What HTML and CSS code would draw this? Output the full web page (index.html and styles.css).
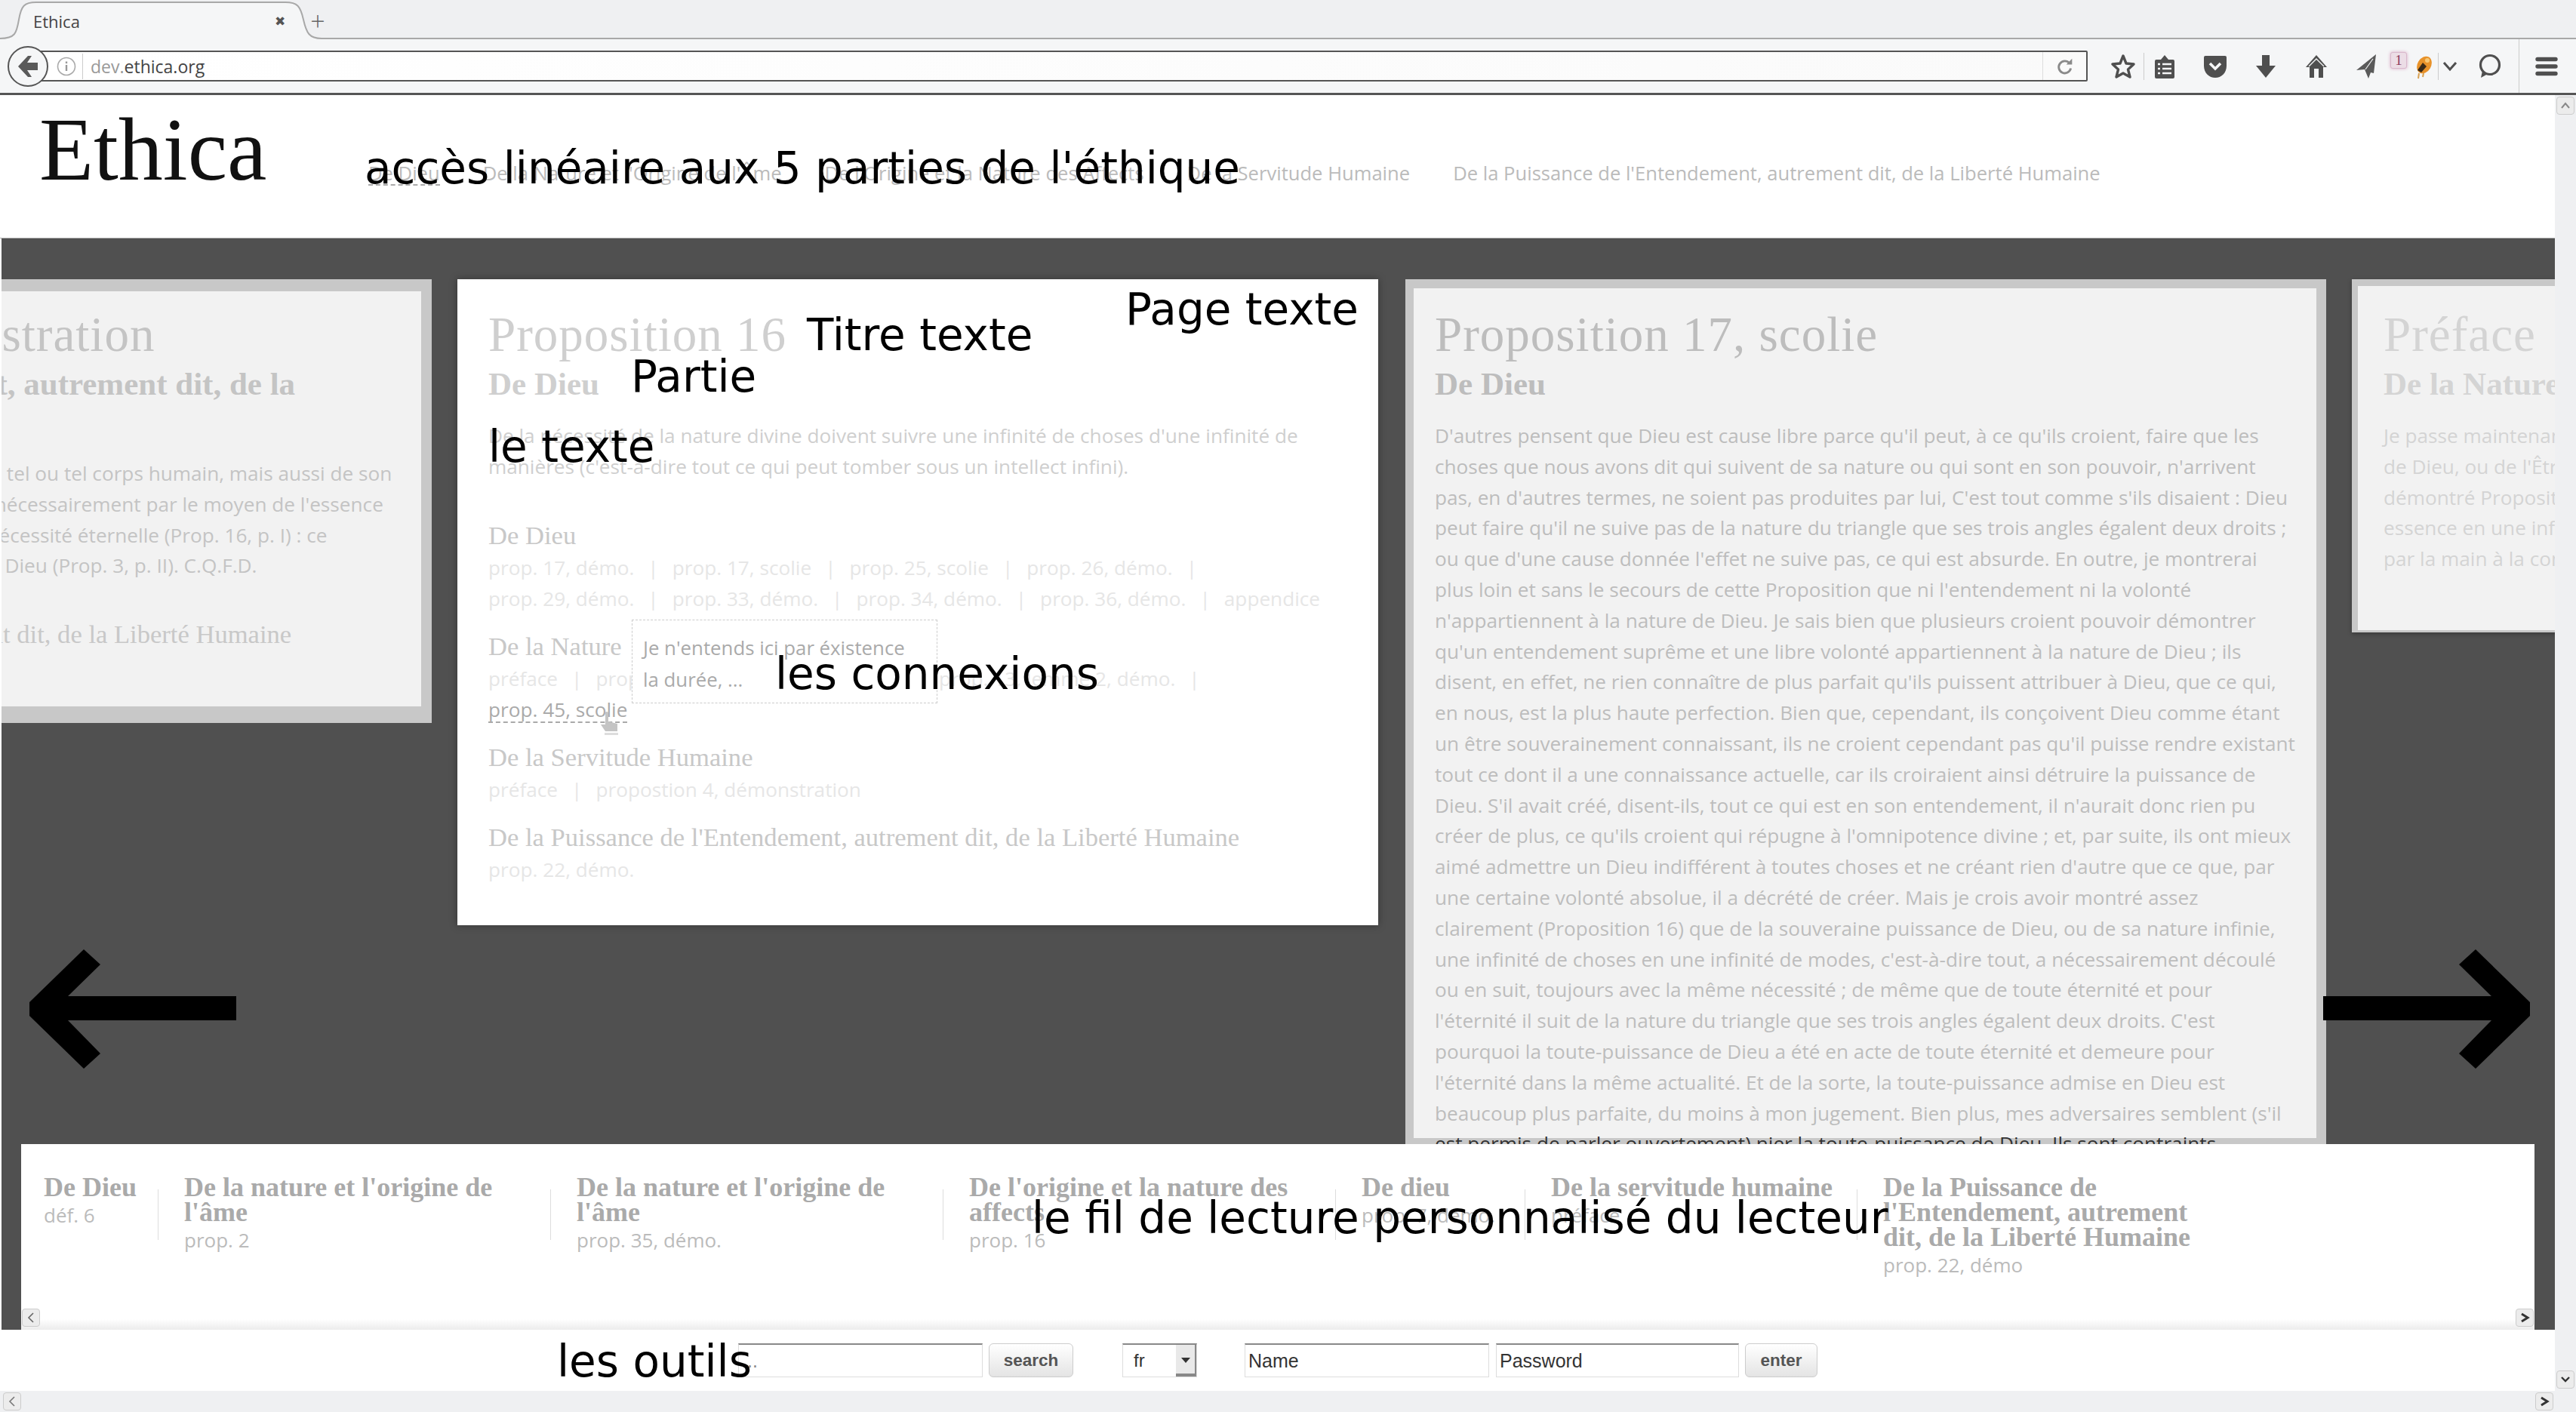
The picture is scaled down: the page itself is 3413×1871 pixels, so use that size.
FILE: index.html
```html
<!DOCTYPE html>
<html lang="fr">
    <head>
        <meta charset="utf-8">
        <title>Ethica</title>
        <link rel="stylesheet" href="styles.css">
    </head>
    <body>

        <!-- browser chrome -->
        <div class="tabbar">
            <svg class="tabshape" width="440" height="54" viewBox="0 0 440 54">
                <path d="M0 51 C20 51 22 44 25 26 C28 8 32 3 48 3 L378 3 C394 3 398 8 402 26 C406 44 410 51 426 51 L440 51 L440 54 L0 54 Z" fill="#f5f6f7"/>
                <path d="M0 51 C20 51 22 44 25 26 C28 8 32 3 48 3 L378 3 C394 3 398 8 402 26 C406 44 410 51 426 51 L440 51" fill="none" stroke="#a8a8a8" stroke-width="2"/>
            </svg>
            <span class="tabtitle">Ethica</span>
            <span class="tabclose">&#10006;</span>
            <span class="tabplus">+</span>
        </div>

        <div class="navbar">
            <div class="backbtn">
                <svg width="30" height="34" viewBox="0 0 30 34"><path d="M2 17 L15 3 L20 3 L14 12 L28 12 L28 22 L14 22 L20 31 L15 31 Z" fill="#5a5a5a"/></svg>
            </div>
            <div class="urlbar">
                <svg class="urlinfo" width="26" height="26" viewBox="0 0 26 26"><circle cx="13" cy="13" r="11.5" fill="none" stroke="#aaa" stroke-width="1.6"/><rect x="11.8" y="11" width="2.4" height="8" fill="#999"/><rect x="11.8" y="6.5" width="2.4" height="2.6" fill="#999"/></svg>
                <span class="urltext"><span class="urlsub">dev.</span>ethica.org</span>
                <span class="urlreload">
                    <svg width="22" height="24" viewBox="0 0 26 28"><path d="M20 9 A9.5 9.5 0 1 0 22 17" fill="none" stroke="#8a8a8a" stroke-width="3.4"/><path d="M15 11 L24 11 L24 2 Z" fill="#8a8a8a"/></svg>
                </span>
            </div>
            <div class="tools-icons">
                <svg class="ic ic-star" width="32" height="34" viewBox="0 0 32 34"><path d="M16 3 L20 13 L30 14 L22.5 21 L25 31 L16 26 L7 31 L9.500 21 L2 14 L12 13 Z" fill="none" stroke="#4f4f4f" stroke-width="3.4" stroke-linejoin="round"/></svg>
                <i class="ic-sep ic-sep-a"></i>
                <svg class="ic ic-list" width="28" height="34" viewBox="0 0 28 34"><path d="M3 8 H9 L14 2 L19 8 H25 Q27 8 27 10 V31 Q27 33 25 33 H3 Q1 33 1 31 V10 Q1 8 3 8 Z" fill="#4f4f4f"/><path d="M5 14 H8 M11 14 H23 M5 20 H8 M11 20 H23 M5 26 H8 M11 26 H23" stroke="#f5f6f7" stroke-width="2.400"/></svg>
                <svg class="ic ic-pocket" width="32" height="32" viewBox="0 0 32 32"><path d="M3 2 H29 Q31 2 31 4 V15 C31 25 24 31 16 31 C8 31 1 25 1 15 V4 Q1 2 3 2 Z" fill="#4f4f4f"/><path d="M9 12 L16 19 L23 12" fill="none" stroke="#f5f6f7" stroke-width="3.6"/></svg>
                <svg class="ic ic-down" width="28" height="32" viewBox="0 0 28 32"><path d="M9 1 H19 V15 H27 L14 31 L1 15 H9 Z" fill="#4f4f4f"/></svg>
                <svg class="ic ic-home" width="30" height="32" viewBox="0 0 30 32"><path d="M15 1 L29 17 H24 V31 H18 V19 H12 V31 H6 V17 H1 Z" fill="#4f4f4f"/><path d="M5 16 L15 6 L25 16" fill="none" stroke="#f5f6f7" stroke-width="1.4"/></svg>
                <svg class="ic ic-send" width="28" height="34" viewBox="0 0 28 34"><path d="M27 1 L1 22 L12 21 L17 33 L20 25 L24 26 Z" fill="#5a5a5a"/><path d="M23 7 L13 21" stroke="#f5f6f7" stroke-width="1.200"/></svg>
                <span class="badge">1</span>
                <svg class="ic ic-bug" width="26" height="34" viewBox="0 0 26 34"><ellipse cx="14" cy="15" rx="9" ry="12" fill="#e8922a" transform="rotate(30 14 15)"/><path d="M5 22 L12 12 L17 17 L10 25 Z" fill="#3a2a18"/><circle cx="18" cy="9" r="3" fill="#f7c878"/><path d="M7 26 L6 33 M13 26 L12 31" stroke="#d8a050" stroke-width="2"/></svg>
                <i class="ic-sep ic-sep-b"></i>
                <svg class="ic ic-chev" width="20" height="14" viewBox="0 0 20 14"><path d="M2 2 L10 11 L18 2" fill="none" stroke="#4f4f4f" stroke-width="3"/></svg>
                <svg class="ic ic-bubble" width="32" height="36" viewBox="0 0 32 36"><circle cx="16" cy="16" r="12.500" fill="none" stroke="#4f4f4f" stroke-width="3.2"/><path d="M6 24 L4 33 L13 28 Z" fill="#4f4f4f"/></svg>
                <i class="ic-sep ic-sep-c"></i>
                <svg class="ic ic-menu" width="30" height="26" viewBox="0 0 30 26"><path d="M3 3.500 H27 M3 13 H27 M3 22.500 H27" stroke="#4f4f4f" stroke-width="5.400" stroke-linecap="round"/></svg>
            </div>
        </div>

        <div class="page">
            <div class="content">

                <div class="header">
                    <h1 class="logo">Ethica</h1>
                    <ul class="menu">
                        <li class="menu-active">De Dieu</li>
                        <li>De la Nature et l'Origine de l'Âme</li>
                        <li>De l'Origine et la Nature des Affects</li>
                        <li>De la Servitude Humaine</li>
                        <li>De la Puissance de l'Entendement, autrement dit, de la Liberté Humaine</li>
                    </ul>
                </div>

                <div class="stage">

                    <div class="card card-left">
                        <h2 class="title">Proposition 22, démonstration</h2>
                        <h3 class="part">De la Puissance de l'Entendement, autrement dit, de la Liberté Humaine</h3>
                        <p class="body">Dieu est la cause, non seulement de l'existence de tel ou tel corps humain, mais aussi de son<br>essence (Prop. 25, p. I), laquelle doit se concevoir nécessairement par le moyen de l'essence<br>de Dieu (Ax. 4, p. I), et cela même d'une certaine nécessité éternelle (Prop. 16, p. I) : ce<br>concept doit donc de plus être nécessairement en Dieu (Prop. 3, p. II). C.Q.F.D.</p>
                        <h4 class="conn-head conn-first">De la Puissance de l'Entendement, autrement dit, de la Liberté Humaine</h4>
                    </div>

                    <div class="card card-main">
                        <h2 class="title">Proposition 16</h2>
                        <h3 class="part">De Dieu</h3>
                        <p class="body">De la nécessité de la nature divine doivent suivre une infinité de choses d'une infinité de<br>manières (c'est-à-dire tout ce qui peut tomber sous un intellect infini).</p>

                        <div class="conn conn-first">
                            <h4 class="conn-head">De Dieu</h4>
                            <div class="links">prop. 17, démo.<i>|</i>prop. 17, scolie<i>|</i>prop. 25, scolie<i>|</i>prop. 26, démo.<i>|</i><br>prop. 29, démo.<i>|</i>prop. 33, démo.<i>|</i>prop. 34, démo.<i>|</i>prop. 36, démo.<i>|</i>appendice</div>
                        </div>
                        <div class="conn">
                            <h4 class="conn-head">De la Nature</h4>
                            <div class="links">préface<i>|</i>prop. 3, scolie<i>|</i>prop. 10, scolie<i>|</i>prop. 13, lemme 2, démo.<i>|</i><br><span class="link-hover">prop. 45, scolie</span></div>
                        </div>
                        <div class="conn">
                            <h4 class="conn-head">De la Servitude Humaine</h4>
                            <div class="links">préface<i>|</i>propostion 4, démonstration</div>
                        </div>
                        <div class="conn">
                            <h4 class="conn-head">De la Puissance de l'Entendement, autrement dit, de la Liberté Humaine</h4>
                            <div class="links">prop. 22, démo.</div>
                        </div>

                        <div class="tooltip">Je n'entends ici par éxistence<br>la durée, ...</div>
                        <svg class="handcursor" width="28" height="34" viewBox="0 0 28 34"><path d="M8 2 Q10 0 12 2 V14 L24 17 V27 H8 L2 18 L8 18 Z" fill="#c4c4c4"/><rect x="7" y="29" width="18" height="3" fill="#ddd"/></svg>
                    </div>

                    <div class="card card-mid">
                        <h2 class="title">Proposition 17, scolie</h2>
                        <h3 class="part">De Dieu</h3>
                        <p class="body">D'autres pensent que Dieu est cause libre parce qu'il peut, à ce qu'ils croient, faire que les<br>choses que nous avons dit qui suivent de sa nature ou qui sont en son pouvoir, n'arrivent<br>pas, en d'autres termes, ne soient pas produites par lui, C'est tout comme s'ils disaient : Dieu<br>peut faire qu'il ne suive pas de la nature du triangle que ses trois angles égalent deux droits ;<br>ou que d'une cause donnée l'effet ne suive pas, ce qui est absurde. En outre, je montrerai<br>plus loin et sans le secours de cette Proposition que ni l'entendement ni la volonté<br>n'appartiennent à la nature de Dieu. Je sais bien que plusieurs croient pouvoir démontrer<br>qu'un entendement suprême et une libre volonté appartiennent à la nature de Dieu ; ils<br>disent, en effet, ne rien connaître de plus parfait qu'ils puissent attribuer à Dieu, que ce qui,<br>en nous, est la plus haute perfection. Bien que, cependant, ils conçoivent Dieu comme étant<br>un être souverainement connaissant, ils ne croient cependant pas qu'il puisse rendre existant<br>tout ce dont il a une connaissance actuelle, car ils croiraient ainsi détruire la puissance de<br>Dieu. S'il avait créé, disent-ils, tout ce qui est en son entendement, il n'aurait donc rien pu<br>créer de plus, ce qu'ils croient qui répugne à l'omnipotence divine ; et, par suite, ils ont mieux<br>aimé admettre un Dieu indifférent à toutes choses et ne créant rien d'autre que ce que, par<br>une certaine volonté absolue, il a décrété de créer. Mais je crois avoir montré assez<br>clairement (Proposition 16) que de la souveraine puissance de Dieu, ou de sa nature infinie,<br>une infinité de choses en une infinité de modes, c'est-à-dire tout, a nécessairement découlé<br>ou en suit, toujours avec la même nécessité ; de même que de toute éternité et pour<br>l'éternité il suit de la nature du triangle que ses trois angles égalent deux droits. C'est<br>pourquoi la toute-puissance de Dieu a été en acte de toute éternité et demeure pour<br>l'éternité dans la même actualité. Et de la sorte, la toute-puissance admise en Dieu est<br>beaucoup plus parfaite, du moins à mon jugement. Bien plus, mes adversaires semblent (s'il<br><span class="overflowline">est permis de parler ouvertement) nier la toute-puissance de Dieu. Ils sont contraints</span></p>
                    </div>

                    <div class="card card-right">
                        <h2 class="title">Préface</h2>
                        <h3 class="part">De la Nature et l'Origine de l'Âme</h3>
                        <p class="body">Je passe maintenant à l'explication de ces choses<br>de Dieu, ou de l'Être éternel et infini<br>démontré Proposition 16, partie 1<br>essence en une infinité de modes<br>par la main à la connaissance</p>
                    </div>

                    <!-- reading thread -->
                    <div class="reader">
                        <div class="read-item read-first">
                            <div class="read-title">De Dieu</div>
                            <div class="read-sub">déf. 6</div>
                        </div>
                        <div class="read-item read-wide">
                            <div class="read-title">De la nature et l'origine de<br>l'âme</div>
                            <div class="read-sub">prop. 2</div>
                        </div>
                        <div class="read-item read-wide">
                            <div class="read-title">De la nature et l'origine de<br>l'âme</div>
                            <div class="read-sub">prop. 35, démo.</div>
                        </div>
                        <div class="read-item read-wide">
                            <div class="read-title">De l'origine et la nature des<br>affects</div>
                            <div class="read-sub">prop. 16</div>
                        </div>
                        <div class="read-item read-narrow">
                            <div class="read-title">De dieu</div>
                            <div class="read-sub">prop. 7, démo.</div>
                        </div>
                        <div class="read-item read-mid">
                            <div class="read-title">De la servitude humaine</div>
                            <div class="read-sub">préface</div>
                        </div>
                        <div class="read-item read-mid">
                            <div class="read-title">De la Puissance de<br>l'Entendement, autrement<br>dit, de la Liberté Humaine</div>
                            <div class="read-sub">prop. 22, démo</div>
                        </div>
                        <span class="sbtn sbtn-left"><svg width="10" height="16" viewBox="0 0 10 16"><path d="M8 2 L2 8 L8 14" fill="none" stroke="#666" stroke-width="1.600"/></svg></span>
                        <span class="sbtn sbtn-right"><svg width="14" height="14" viewBox="0 0 14 14"><path d="M3 2 L11 7 L3 12" fill="none" stroke="#333" stroke-width="3"/></svg></span>
                    </div>

                    <svg class="bigarrow bigarrow-left" width="274" height="158" viewBox="0 0 274 158"><path d="M274 62 H51 L94 20 L72 0 L0 70 V88 L72 158 L94 138 L51 94 H274 Z" fill="#000"/></svg>
                    <svg class="bigarrow bigarrow-right" width="274" height="158" viewBox="0 0 274 158"><path d="M0 62 H223 L180 20 L202 0 L274 70 V88 L202 158 L180 138 L223 94 H0 Z" fill="#000"/></svg>
                </div>

                <div class="tools">
                    <input class="field field-search" type="text" value="...">
                    <button class="btn btn-search">search</button>
                    <div class="lang"><span>fr</span><i class="lang-arrow"></i></div>
                    <input class="field field-name" type="text" placeholder="Name">
                    <input class="field field-pass" type="text" placeholder="Password">
                    <button class="btn btn-enter">enter</button>
                </div>

            </div>

            <div class="vscroll">
                <span class="sbtn"><svg width="14" height="10" viewBox="0 0 14 10"><path d="M2 8 L7 2 L12 8" fill="none" stroke="#888" stroke-width="2"/></svg></span>
                <span class="sbtn"><svg width="14" height="10" viewBox="0 0 14 10"><path d="M2 2 L7 7 L12 2" fill="none" stroke="#333" stroke-width="2.400"/></svg></span>
            </div>
        </div>

        <div class="hscroll">
            <span class="sbtn"><svg width="10" height="16" viewBox="0 0 10 16"><path d="M8 2 L2 8 L8 14" fill="none" stroke="#777" stroke-width="1.600"/></svg></span>
            <span class="sbtn"><svg width="14" height="14" viewBox="0 0 14 14"><path d="M3 2 L11 7 L3 12" fill="none" stroke="#333" stroke-width="3"/></svg></span>
        </div>

        <!-- notes written over the screenshot -->
        <span class="note note-acces">accès linéaire aux 5 parties de l'éthique</span>
        <span class="note note-titre">Titre texte</span>
        <span class="note note-page">Page texte</span>
        <span class="note note-partie">Partie</span>
        <span class="note note-texte">le texte</span>
        <span class="note note-conn">les connexions</span>
        <span class="note note-fil">le fil de lecture personnalisé du lecteur</span>
        <span class="note note-outils">les outils</span>

    </body>
</html>
```

FILE: styles.css
```css
*
{
    box-sizing: border-box;
}

html, body
{
    height: 100%;
    margin: 0;
    overflow: hidden;
}

body
{
    display: flex;
    flex-direction: column;
    position: relative;
    background: #fff;
    font: 24px "Open Sans", sans-serif;
}

h1, h2, h3, h4, p, ul
{
    margin: 0;
    padding: 0;
    font-weight: normal;
}

/* browser chrome */
.tabbar
{
    flex: none;
    height: 52px;
    background: #eff0f2;
    border-bottom: 2px solid #a8a8a8;
    display: flex;
    align-items: center;
    position: relative;
    padding-top: 6px;
    color: #444;
}
.tabshape
{
    position: absolute;
    left: 0;
    top: 0;
}
.tabtitle
{
    position: relative;
    margin-left: 44px;
    width: 320px;
    font-size: 22px;
}
.tabclose
{
    position: relative;
    font: 17px "DejaVu Sans", sans-serif;
    color: #555;
}
.tabplus
{
    position: relative;
    margin-left: 33px;
    font: 300 34px "Open Sans", sans-serif;
    color: #666;
}

.navbar
{
    flex: none;
    height: 74px;
    background: #f5f6f7;
    border-bottom: 3px solid #555;
    display: flex;
    align-items: center;
    padding-left: 10px;
    position: relative;
}
.backbtn
{
    width: 54px;
    height: 54px;
    flex: none;
    border: 2px solid #555;
    border-radius: 50%;
    background: #f5f6f7;
    display: flex;
    align-items: center;
    justify-content: center;
    position: relative;
    z-index: 1;
}
.urlbar
{
    width: 2716px;
    height: 41px;
    margin-left: -14px;
    flex: none;
    border: 2px solid #555;
    border-radius: 2px;
    background: linear-gradient(90deg, #fff, #fafafa);
    display: flex;
    align-items: center;
    padding-left: 23px;
}
.urlinfo
{
    flex: none;
}
.urltext
{
    margin-left: 8px;
    padding-left: 10px;
    border-left: 1px solid #ccc;
    line-height: 34px;
    font-size: 23px;
    color: #444;
    flex: 1;
}
.urlsub
{
    color: #999;
}
.urlreload
{
    width: 58px;
    height: 37px;
    border-left: 1px solid #ddd;
    display: flex;
    align-items: center;
    justify-content: center;
}
.tools-icons
{
    flex: 1;
    height: 100%;
    display: flex;
    align-items: center;
    padding-left: 31px;
}
.ic
{
    flex: none;
}
.ic-sep
{
    flex: none;
    width: 1px;
    height: 36px;
    background: #ccc;
}
.ic-sep-a { margin: 0 13px 0 11px; }
.ic-pocket { margin-left: 37px; }
.ic-down { margin-left: 37px; }
.ic-home { margin-left: 38px; }
.ic-send { margin-left: 37px; }
.badge
{
    flex: none;
    margin-left: 18px;
    margin-top: -16px;
    width: 22px;
    height: 22px;
    background: #ecdde6;
    border: 1px solid #d9b8cc;
    border-radius: 3px;
    box-shadow: 0 0 4px #d8a8c4;
    font: 19px "Liberation Serif", serif;
    color: #8a3a5c;
    text-align: center;
    line-height: 20px;
}
.ic-bug { margin-left: 9px; }
.ic-sep-b { margin: 0 5px 0 6px; }
.ic-chev { margin-left: 0; }
.ic-bubble { margin-left: 27px; }
.ic-sep-c { height: 100%; margin-left: 22px; }
.ic-menu { margin-left: 21px; }

/* page */
.page
{
    flex: 1;
    min-height: 0;
    display: flex;
}
.content
{
    flex: 1;
    min-width: 0;
    display: flex;
    flex-direction: column;
}
.vscroll
{
    flex: none;
    width: 28px;
    background: #eff0f2;
    display: flex;
    flex-direction: column;
    justify-content: space-between;
    align-items: center;
    padding: 2px 0 3px;
}
.hscroll
{
    flex: none;
    height: 28px;
    background: #eff0f2;
    display: flex;
    align-items: center;
    justify-content: space-between;
    padding: 0 30px 0 4px;
}
.sbtn
{
    width: 24px;
    height: 24px;
    flex: none;
    border: 1px solid #ccc;
    border-radius: 4px;
    background: #ececec;
    display: flex;
    align-items: center;
    justify-content: center;
}

.header
{
    flex: none;
    height: 190px;
    display: flex;
    position: relative;
    border-bottom: 1px solid #aaa;
}
.logo
{
    font: 118px/1 "Liberation Serif", serif;
    color: #111;
    margin: 14px 0 0 52px;
    flex: none;
    width: 436px;
}
.menu
{
    list-style: none;
    display: flex;
    gap: 57px;
    padding-top: 86px;
    font-size: 25.6px;
    line-height: 36px;
    color: #bbb;
    white-space: nowrap;
}
.menu-active
{
    height: 34px;
    border-bottom: 2px dashed #aaa;
}

.stage
{
    flex: 1;
    min-height: 0;
    position: relative;
    overflow: hidden;
    background: #505050;
    margin-left: 2px;
    padding-top: 54px;
    display: flex;
    align-items: flex-start;
    gap: 34px;
}

/* text cards */
.card
{
    flex: none;
    position: relative;
    background: #f2f2f2;
    border: 0 solid #c8c8c8;
    white-space: nowrap;
    color: #c4c4c4;
}
.title
{
    font: 65px/72px "Liberation Serif", serif;
    letter-spacing: 1px;
}
.part
{
    font: bold 43px/50px "Liberation Serif", serif;
    margin-top: 5px;
}
.body
{
    margin-top: 23px;
    font-size: 26.2px;
    line-height: 40.8px;
}
.card-left
{
    width: 1222px;
    height: 588px;
    margin-left: -652px;
    border-width: 16px 14px 22px 0;
    padding: 21px 0 0 41px;
}
.card-left .part
{
    white-space: normal;
    width: 1040px;
}
.card-main
{
    width: 1220px;
    height: 856px;
    background: #fff;
    padding: 37px 0 0 41px;
    color: #cfcfcf;
    box-shadow: 0 0 10px rgba(0, 0, 0, .35);
}
.card-mid
{
    width: 1220px;
    height: 1146px;
    margin-left: 2px;
    border-width: 12px 13px 8px 11px;
    padding: 25px 0 0 28px;
    color: #bdbdbd;
}
.overflowline
{
    color: #333;
}
.card-right
{
    width: 600px;
    height: 468px;
    border-width: 9px 0 3px 8px;
    padding: 28px 0 0 34px;
    color: #d4d4d4;
    box-shadow: 0 2px 6px rgba(0, 0, 0, .3);
}
.conn-head
{
    font: 34.6px/41px "Liberation Serif", serif;
    color: #c8c8c8;
}
.conn
{
    margin-top: 22px;
}
.conn-first
{
    margin-top: 50px;
}
.links
{
    padding-top: 2px;
    font-size: 26.2px;
    line-height: 41px;
    color: #e6e6e6;
}
.links i
{
    font-style: normal;
    margin: 0 18px;
}
.link-hover
{
    display: inline-block;
    line-height: 31px;
    color: #aaa;
    border-bottom: 2px dashed #aaa;
}

/* things lying over the main card */
.tooltip
{
    position: absolute;
    left: 231px;
    top: 451px;
    width: 405px;
    height: 111px;
    background: #fff;
    border: 1px dashed #ccc;
    padding: 15px 0 0 14px;
    font-size: 25.800px;
    line-height: 42px;
    color: #aaa;
}
.handcursor
{
    position: absolute;
    left: 188px;
    top: 572px;
}

/* reading thread */
.reader
{
    position: absolute;
    left: 26px;
    right: 27px;
    bottom: 0;
    height: 246px;
    background: linear-gradient(#fff 232px, #ececec);
    padding: 41px 0 0 30px;
    display: flex;
    align-items: flex-start;
    white-space: nowrap;
}
.read-item
{
    position: relative;
    flex: none;
    padding-left: 35px;
}
.read-item::before
{
    content: "";
    position: absolute;
    left: 0;
    top: 19px;
    width: 1px;
    height: 67px;
    background: #ddd;
}
.read-first
{
    padding: 0;
    width: 151px;
}
.read-first::before
{
    display: none;
}
.read-wide { width: 520px; }
.read-narrow { width: 251px; }
.read-mid { width: 440px; }
.read-title
{
    font: bold 36px/33px "Liberation Serif", serif;
    color: #aaa;
}
.read-sub
{
    font-size: 26px;
    line-height: 40px;
    color: #bbb;
}
.sbtn-left
{
    position: absolute;
    left: 1px;
    bottom: 4px;
}
.sbtn-right
{
    position: absolute;
    right: 1px;
    bottom: 4px;
}

.bigarrow
{
    position: absolute;
    top: 942px;
}
.bigarrow-left { left: 37px; }
.bigarrow-right { left: 3076px; }

/* tools */
.tools
{
    flex: none;
    height: 81px;
    display: flex;
    align-items: center;
    padding-left: 978px;
    font: 24px "Liberation Sans", sans-serif;
}
.field
{
    height: 45px;
    border: 1px solid #ddd;
    border-top: 2px solid #888;
    background: #fff;
    padding: 0 4px;
    font: 25px "Liberation Sans", sans-serif;
    color: #333;
}
.field::placeholder
{
    color: #333;
    opacity: 1;
}
.field-search { width: 324px; color: #888; }
.field-name { width: 324px; margin-left: 63px; }
.field-pass { width: 322px; margin-left: 9px; }
.btn
{
    height: 45px;
    margin-left: 8px;
    border: 1px solid #ccc;
    border-radius: 6px;
    background: linear-gradient(#fff, #e4e4e4);
    font: bold 22.5px "Liberation Sans", sans-serif;
    color: #555;
}
.btn-search { width: 112px; }
.btn-enter { width: 96px; }
.lang
{
    width: 99px;
    height: 45px;
    margin-left: 65px;
    border: 1px solid #ddd;
    border-top: 2px solid #888;
    padding-left: 14px;
    line-height: 42px;
    position: relative;
    color: #333;
}
.lang-arrow
{
    position: absolute;
    right: 0;
    top: 0;
    bottom: 0;
    width: 27px;
    background: #e9e9e9;
    border-right: 2px solid #888;
    border-bottom: 4px solid #888;
}
.lang-arrow::after
{
    content: "";
    position: absolute;
    left: 7px;
    top: 17px;
    border: 6px solid transparent;
    border-top: 7px solid #333;
}

/* notes */
.note
{
    position: absolute;
    font: 58px/1 "DejaVu Sans", sans-serif;
    color: #000;
    white-space: nowrap;
}
.note-acces { left: 483px; top: 194px; }
.note-titre { left: 1069px; top: 415px; }
.note-page { left: 1491px; top: 381px; }
.note-partie { left: 836px; top: 470px; }
.note-texte { left: 647px; top: 563px; }
.note-conn { left: 1027px; top: 864px; }
.note-fil { left: 1367px; top: 1585px; }
.note-outils { left: 738px; top: 1775px; }
```
